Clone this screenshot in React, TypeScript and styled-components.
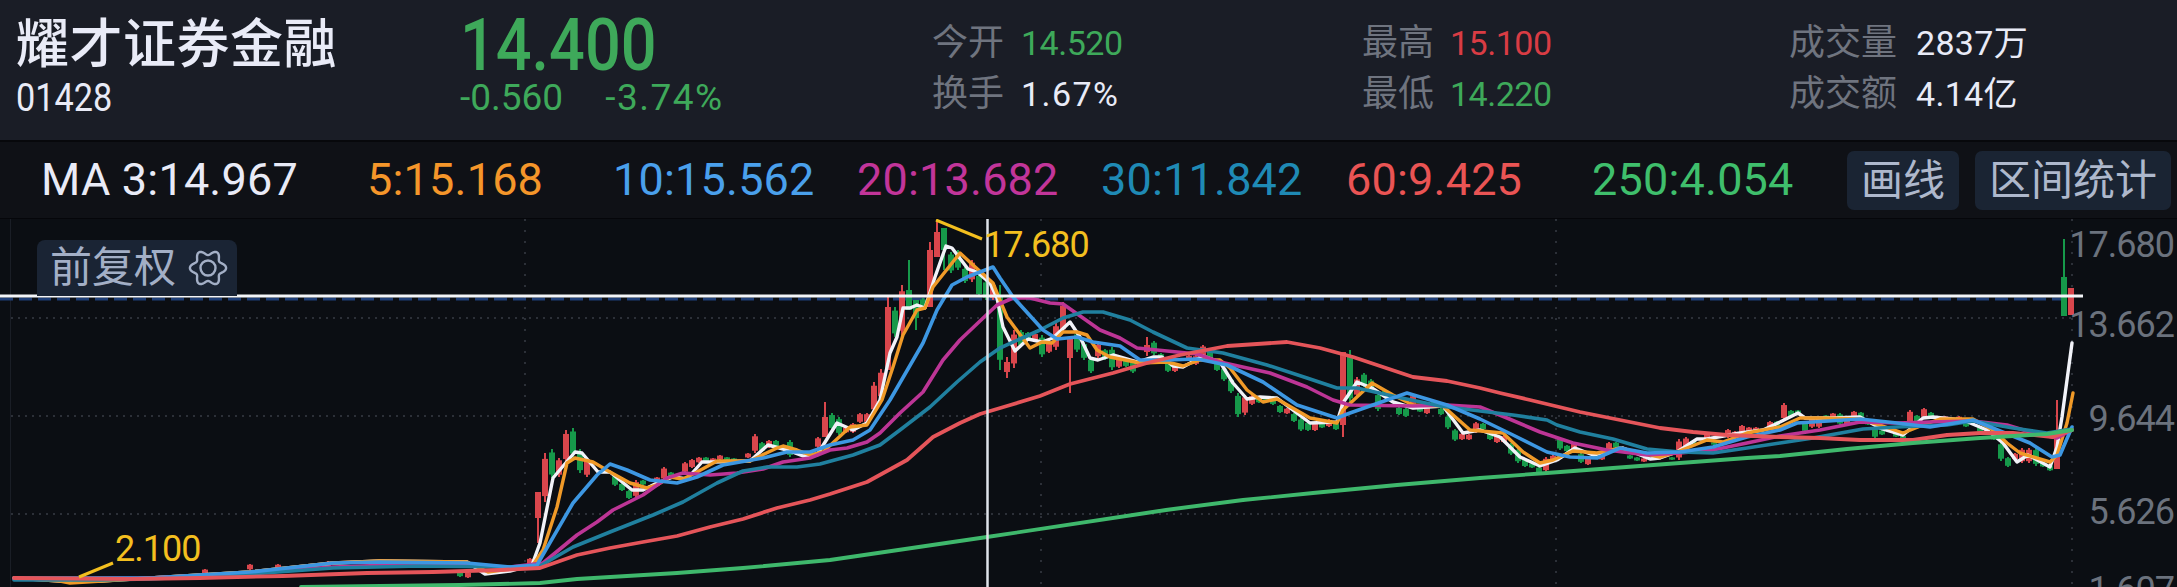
import React from 'react';
import styled, { createGlobalStyle } from 'styled-components';

const GlobalStyle = createGlobalStyle`
  html, body {
    margin: 0;
    padding: 0;
    background: #0b0e13;
  }
  body {
    width: 2177px;
    height: 587px;
    overflow: hidden;
    font-family: Roboto, 'Noto Sans CJK SC', sans-serif;
  }
`;

const GREEN = '#3ea95a';
const RED = '#d93c44';
const WHITE = '#e9ebf7';
const YELLOW = '#f3bf1f';

const Page = styled.div`
  width: 2177px;
  height: 587px;
  overflow: hidden;
  display: flex;
  flex-direction: column;
`;

const Header = styled.header`
  height: 142px;
  box-sizing: border-box;
  padding: 14px 0 0 16px;
  background: #1a1d26;
  border-bottom: 2px solid #07080b;
  display: grid;
  grid-template-columns: 444px 472px 430px 427px 1fr;
  flex: none;
`;

const Identity = styled.div`
  display: flex;
  flex-direction: column;
`;

const Title = styled.h1`
  margin: 0;
  height: 63px;
  font-size: 53px;
  line-height: 63px;
  font-weight: 500;
  letter-spacing: 0.5px;
  color: ${WHITE};
  white-space: nowrap;
`;

const Squeezed = styled.span<{ $ratio: number }>`
  display: inline-block;
  transform: scaleX(${(p) => p.$ratio});
  transform-origin: left center;
  white-space: nowrap;
`;

const Code = styled.div`
  height: 42px;
  font-size: 38px;
  line-height: 42px;
  color: ${WHITE};
`;

const PriceBlock = styled.div`
  display: flex;
  flex-direction: column;
`;

const Price = styled.div`
  height: 62px;
  padding-top: 1px;
  font-size: 72px;
  line-height: 62px;
  font-weight: 500;
  color: ${GREEN};
`;

const ChangeRow = styled.div`
  display: flex;
  gap: 42px;
  font-size: 37px;
  line-height: 42px;
  color: ${GREEN};
`;

const Percent = styled.span`
  letter-spacing: 1.5px;
`;

const StatColumn = styled.div`
  padding-top: 4px;
  display: flex;
  flex-direction: column;
`;

const Stat = styled.div<{ $gap: number }>`
  height: 51px;
  display: flex;
  align-items: center;
  gap: ${(p) => p.$gap}px;
`;

const StatLabel = styled.span`
  font-size: 36px;
  line-height: 51px;
  color: #6f747f;
  white-space: nowrap;
`;

const StatValue = styled.span<{ $color: string; $spacing?: number }>`
  font-size: 34px;
  line-height: 51px;
  letter-spacing: ${(p) => p.$spacing ?? -0.5}px;
  color: ${(p) => p.$color};
  white-space: nowrap;
`;

const MaBar = styled.div`
  height: 77px;
  box-sizing: border-box;
  padding-left: 41px;
  background: #0f1116;
  border-bottom: 1px solid #05060a;
  display: grid;
  grid-template-columns: 326px 246px 244px 244px 245px 246px 255px 1fr;
  align-items: center;
  flex: none;
`;

const MaValue = styled.span<{ $color: string }>`
  font-size: 45px;
  line-height: 76px;
  letter-spacing: 0.2px;
  color: ${(p) => p.$color};
  white-space: nowrap;
`;

const ToolGroup = styled.div`
  display: flex;
  gap: 16px;
`;

const ToolButton = styled.button`
  height: 59px;
  padding: 0 14px;
  border: none;
  border-radius: 7px;
  background: #1a2433;
  color: #aeb8cc;
  font-family: inherit;
  font-size: 42px;
  line-height: 59px;
  white-space: nowrap;
`;

const ChartArea = styled.div`
  position: relative;
  flex: 1;
  background: #0b0e13;
  overflow: hidden;
`;

const ChartSvg = styled.svg`
  display: block;
  width: 2177px;
  height: 368px;
`;

const AdjustChip = styled.div`
  position: absolute;
  left: 37px;
  top: 21px;
  width: 200px;
  height: 56px;
  box-sizing: border-box;
  padding-left: 13px;
  display: flex;
  align-items: center;
  gap: 12px;
  border-radius: 8px 8px 0 0;
  background: #1a2434;
  color: #a3afc6;
  font-size: 42px;
  line-height: 56px;
`;

const AxisLabel = styled.span<{ $top: number }>`
  position: absolute;
  right: 3px;
  top: ${(p) => p.$top}px;
  font-size: 36px;
  line-height: 36px;
  letter-spacing: -1px;
  color: #6b727d;
`;

const PriceTag = styled.span<{ $left: number; $top: number }>`
  position: absolute;
  left: ${(p) => p.$left}px;
  top: ${(p) => p.$top}px;
  font-size: 36px;
  line-height: 36px;
  letter-spacing: -1px;
  color: ${YELLOW};
`;

const GearIcon = () => {
  const pts: string[] = [];
  for (let i = 0; i < 96; i++) {
    const a = (i / 96) * Math.PI * 2;
    const r = 15.5 + 2.6 * Math.cos(6 * a);
    pts.push(`${(20 + r * Math.cos(a)).toFixed(2)},${(18 + r * Math.sin(a)).toFixed(2)}`);
  }
  return (
    <svg width="40" height="36" viewBox="0 0 40 36" fill="none" stroke="#a3afc6" strokeWidth="2.4">
      <polygon points={pts.join(' ')} strokeLinejoin="round" />
      <circle cx="20" cy="18" r="7.5" />
    </svg>
  );
};

// x, top, bottom, colour, then optional body top / bottom when it differs from the wick
type Candle = [number, number, number, 'r' | 'g', number?, number?];

const candles: Candle[] = [
  [250, 564, 570, 'r'], [278, 564, 570, 'r'], [328, 561, 568, 'r'], [205, 569, 574, 'r'], [460, 570, 577, 'g'], [468, 572, 578, 'r'],
  [530, 558, 565, 'r'], [538, 492, 543, 'r', 492, 518], [545, 453, 502, 'r'], [552, 449, 478, 'g'], [559, 458, 477, 'r'],
  [566, 430, 463, 'r'], [573, 428, 457, 'g'], [580, 449, 473, 'g'], [587, 458, 477, 'r'], [615, 475, 486, 'g'], [622, 483, 491, 'g'],
  [629, 490, 499, 'g'], [636, 480, 498, 'r'], [643, 480, 485, 'g'], [657, 477, 482, 'r'], [664, 467, 480, 'r'], [671, 472, 477, 'g'],
  [685, 462, 473, 'r'], [692, 459, 468, 'r'], [699, 457, 463, 'r'], [706, 457, 462, 'g'], [713, 458, 462, 'r'], [720, 455, 460, 'r'],
  [727, 457, 460, 'g'], [734, 458, 462, 'g'], [748, 453, 458, 'r'], [755, 434, 453, 'r'], [762, 442, 452, 'g'], [769, 440, 448, 'r'],
  [776, 440, 448, 'g'], [790, 440, 457, 'g'], [818, 437, 448, 'r'], [825, 402, 437, 'r', 417, 437], [832, 413, 430, 'g'], [839, 417, 435, 'g'],
  [846, 427, 433, 'r'], [853, 423, 433, 'r'], [860, 413, 423, 'r'], [867, 413, 423, 'r'], [874, 382, 413, 'r'], [881, 369, 400, 'r'],
  [888, 297, 370, 'r', 307, 370], [895, 307, 337, 'g'], [902, 285, 337, 'r'], [909, 260, 310, 'g', 290, 310], [916, 300, 330, 'g', 300, 318],
  [923, 298, 310, 'g'], [930, 242, 307, 'r', 250, 307], [937, 220, 257, 'r', 232, 257], [944, 228, 270, 'g', 228, 250], [951, 252, 273, 'g'],
  [958, 250, 270, 'g'], [965, 267, 283, 'g'], [972, 260, 282, 'r'], [979, 273, 297, 'g'], [986, 280, 300, 'g'], [993, 283, 300, 'r'],
  [1000, 285, 370, 'g'], [1007, 357, 378, 'r', 362, 372], [1014, 330, 368, 'r'], [1021, 330, 347, 'g'], [1028, 332, 340, 'g'], [1035, 333, 342, 'r'],
  [1042, 335, 357, 'g'], [1049, 342, 353, 'r'], [1056, 323, 350, 'r'], [1063, 302, 333, 'r'], [1070, 337, 393, 'r', 337, 358], [1077, 332, 352, 'g'],
  [1084, 342, 360, 'g'], [1091, 358, 373, 'g'], [1098, 343, 358, 'r'], [1105, 349, 360, 'g'], [1112, 347, 370, 'g'], [1119, 357, 368, 'r'],
  [1126, 358, 367, 'g'], [1133, 360, 373, 'g'], [1147, 337, 356, 'r', 345, 352], [1154, 341, 355, 'g'], [1161, 353, 363, 'g'], [1168, 362, 372, 'g'],
  [1175, 363, 372, 'r'], [1189, 355, 361, 'r'], [1196, 355, 365, 'r'], [1203, 345, 358, 'r'], [1210, 348, 360, 'g'], [1217, 362, 371, 'g'],
  [1224, 367, 381, 'g'], [1231, 378, 393, 'g'], [1238, 393, 417, 'g'], [1245, 395, 415, 'r'], [1252, 395, 405, 'r'], [1259, 397, 403, 'g'],
  [1266, 396, 403, 'g'], [1273, 396, 405, 'g'], [1280, 405, 413, 'g'], [1287, 408, 414, 'r'], [1294, 413, 422, 'g'], [1301, 418, 431, 'g'],
  [1308, 422, 431, 'g'], [1315, 423, 431, 'r'], [1322, 423, 428, 'g'], [1329, 419, 427, 'r'], [1336, 423, 430, 'g'], [1343, 352, 437, 'r', 352, 425],
  [1350, 350, 405, 'g'], [1357, 377, 397, 'r'], [1364, 373, 387, 'g'], [1371, 379, 392, 'g'], [1378, 393, 411, 'g'], [1385, 390, 398, 'g'],
  [1399, 407, 415, 'g'], [1406, 408, 417, 'g'], [1413, 395, 405, 'r'], [1420, 408, 412, 'g'], [1427, 407, 414, 'r'], [1434, 400, 407, 'g'],
  [1441, 408, 415, 'g'], [1448, 415, 429, 'g'], [1455, 429, 441, 'g'], [1462, 433, 440, 'r'], [1469, 434, 440, 'r'], [1476, 422, 433, 'r'],
  [1483, 423, 430, 'g'], [1490, 432, 440, 'g'], [1497, 435, 443, 'r'], [1504, 435, 443, 'r'], [1511, 443, 455, 'g'], [1518, 448, 463, 'g'],
  [1525, 459, 467, 'g'], [1532, 463, 468, 'g'], [1539, 467, 473, 'g'], [1546, 457, 472, 'r'], [1553, 455, 462, 'r'], [1560, 437, 450, 'g'],
  [1567, 445, 452, 'g'], [1574, 443, 452, 'r'], [1581, 453, 463, 'g'], [1588, 458, 465, 'r'], [1595, 455, 458, 'g'], [1602, 455, 460, 'r'],
  [1609, 442, 452, 'r'], [1616, 442, 448, 'g'], [1630, 455, 459, 'g'], [1637, 457, 461, 'g'], [1644, 458, 462, 'r'], [1658, 457, 460, 'r'],
  [1672, 457, 460, 'g'], [1679, 439, 460, 'r'], [1686, 437, 450, 'r'], [1693, 440, 447, 'g'], [1707, 433, 440, 'r'], [1714, 442, 445, 'g'],
  [1728, 429, 438, 'r'], [1735, 431, 438, 'r'], [1742, 425, 433, 'r'], [1749, 427, 432, 'r'], [1756, 427, 433, 'r'], [1770, 421, 430, 'r'],
  [1777, 421, 427, 'g'], [1784, 403, 420, 'r'], [1791, 410, 417, 'g'], [1798, 410, 415, 'g'], [1805, 422, 432, 'g'], [1812, 417, 428, 'r'],
  [1819, 417, 428, 'r'], [1826, 415, 420, 'g'], [1833, 413, 418, 'r'], [1840, 413, 425, 'g'], [1847, 420, 425, 'r'], [1854, 411, 418, 'r'],
  [1861, 412, 418, 'g'], [1868, 420, 425, 'g'], [1875, 427, 438, 'g'], [1882, 430, 435, 'g'], [1896, 433, 437, 'g'], [1903, 435, 442, 'g'],
  [1910, 410, 425, 'r'], [1917, 415, 422, 'g'], [1924, 408, 418, 'r'], [1931, 412, 419, 'g'], [1945, 416, 420, 'r'], [1959, 416, 422, 'r'],
  [1966, 422, 427, 'g'], [1980, 427, 432, 'g'], [1987, 428, 432, 'r'], [1994, 435, 440, 'g'], [2001, 442, 461, 'g'], [2008, 457, 467, 'g'],
  [2015, 453, 460, 'r'], [2022, 448, 463, 'r'], [2029, 448, 463, 'r'], [2036, 448, 466, 'g'], [2043, 462, 467, 'g'], [2050, 465, 471, 'g'],
  [2057, 400, 469, 'r', 430, 469], [2064, 239, 316, 'g', 277, 316], [2071, 288, 315, 'r', 288, 315],
];

const ma3 = '14,578 60,581 100,581 150,578 250,572 333,563 380,561 467,562 485,574 510,571 532,565 540,543 553,478 575,452 582,453 598,472 610,472 632,490 643,490 657,483 673,477 687,479 702,462 713,462 750,461 768,445 787,450 803,456 817,455 837,423 853,430 867,423 880,400 890,353 897,337 903,308 910,308 917,305 925,308 935,277 946,246 952,248 968,269 977,272 990,283 997,298 1003,327 1015,351 1028,339 1042,342 1053,338 1070,322 1080,337 1090,358 1098,360 1113,355 1137,362 1153,357 1162,357 1173,366 1183,367 1203,356 1220,362 1233,383 1247,399 1260,397 1277,398 1310,423 1337,422 1343,403 1357,382 1372,388 1393,402 1413,408 1443,406 1463,433 1480,430 1500,437 1520,457 1540,466 1557,460 1575,448 1593,455 1607,452 1623,448 1650,459 1660,458 1677,452 1697,439 1707,439 1740,433 1763,430 1780,422 1798,413 1805,418 1833,418 1860,417 1880,428 1903,435 1923,418 1933,417 1963,420 1987,430 2003,443 2017,462 2028,455 2050,467 2057,447 2062,417 2072,343';
const ma5 = '14,578 60,581 70,583 150,578 250,572 333,563 380,561 467,562 488,572 510,569 533,565 543,550 557,507 567,463 575,458 593,462 610,472 630,483 647,488 657,485 670,477 683,479 697,472 717,461 750,461 777,448 783,446 797,450 810,455 823,452 850,427 867,425 882,400 893,367 903,335 917,310 925,308 933,287 960,253 973,265 993,283 997,293 1007,317 1030,348 1042,342 1052,343 1063,332 1077,332 1087,335 1097,350 1110,357 1140,363 1167,362 1183,366 1200,360 1220,360 1230,368 1247,390 1263,402 1277,399 1310,418 1337,423 1343,410 1372,383 1393,395 1413,405 1443,406 1470,430 1503,433 1523,452 1540,463 1553,460 1573,451 1597,453 1620,448 1640,453 1660,457 1677,452 1707,440 1723,442 1747,433 1780,427 1800,418 1820,418 1860,419 1880,425 1903,433 1923,425 1940,419 1973,419 1993,430 2007,443 2020,453 2050,462 2057,455 2067,423 2073,393';
const ma10 = '14,578 150,578 250,572 333,563 380,562 467,563 510,567 537,565 573,503 597,475 610,464 627,470 650,480 677,483 697,477 723,465 763,458 787,452 810,452 830,445 853,440 870,430 890,400 923,343 937,310 952,285 967,277 993,267 1000,278 1013,297 1043,330 1057,339 1077,337 1093,342 1120,346 1140,360 1167,360 1197,359 1227,365 1263,382 1297,405 1337,418 1350,413 1407,393 1447,405 1480,419 1513,435 1547,452 1570,457 1597,458 1620,448 1647,453 1680,452 1713,447 1747,437 1780,430 1797,423 1860,419 1897,423 1930,427 1973,420 2010,435 2030,443 2052,457 2060,455 2072,427';
const ma20 = '14,579 150,578 250,573 333,567 420,564 510,567 543,563 577,535 597,522 613,510 643,495 667,478 683,473 710,475 737,473 763,469 783,462 810,458 830,450 847,448 867,442 880,433 900,413 923,392 943,360 960,340 980,321 997,305 1013,298 1030,298 1050,303 1063,304 1083,318 1100,330 1120,338 1137,348 1157,350 1197,354 1220,362 1270,373 1307,387 1333,400 1350,405 1413,406 1447,405 1480,407 1507,418 1540,432 1573,443 1607,450 1647,455 1680,453 1713,450 1747,443 1780,436 1820,430 1860,422 1897,423 1930,422 1973,421 2007,425 2030,432 2057,438 2072,430';
const ma30 = '14,580 100,580 150,579 250,574 333,568 420,566 510,567 540,566 573,547 610,532 653,515 683,502 717,483 743,471 767,467 797,467 820,464 853,455 880,445 900,430 930,407 957,382 980,362 1000,348 1040,330 1063,318 1083,312 1103,312 1130,320 1153,332 1187,348 1223,353 1267,365 1307,378 1337,388 1357,388 1397,397 1440,406 1480,411 1513,415 1547,420 1557,425 1580,432 1613,439 1647,449 1680,452 1713,453 1747,448 1780,443 1813,438 1863,429 1897,427 1947,425 1973,421 2013,428 2047,433 2072,429';
const ma60 = '14,578 130,579 200,578 283,576 367,573 433,572 500,570 540,568 577,555 610,548 643,542 677,536 710,527 743,519 777,508 810,500 830,494 867,482 907,460 933,437 960,423 980,414 1007,406 1040,396 1070,384 1113,373 1147,363 1180,355 1227,346 1287,342 1320,348 1353,357 1380,366 1413,377 1447,381 1480,388 1500,393 1530,400 1580,412 1620,420 1660,428 1693,432 1727,435 1780,437 1820,438 1860,440 1913,440 1947,435 1980,433 2013,433 2053,437 2072,430';
const ma250 = '301,587 459,585 540,583 577,579 677,573 743,568 830,560 987,537 1166,510 1243,500 1313,493 1397,485 1480,478 1547,473 1613,468 1680,463 1747,458 1780,456 1847,449 1913,443 1980,438 2047,434 2072,430';

const lines: [string, string, number][] = [
  [ma3, '#f1f2f8', 3.4],
  [ma5, '#f09a28', 3.4],
  [ma20, '#bd3596', 3.6],
  [ma30, '#20809f', 3.6],
  [ma10, '#3d97e2', 3.6],
  [ma60, '#e5555a', 3.8],
  [ma250, '#3fb86c', 3.8],
];

const gridRows = [318, 416, 514];
const gridCols = [525, 1041, 1556, 2072];

const Chart = () => (
  <ChartSvg viewBox="0 219 2177 368" fill="none">
    <line x1="10.5" y1="219" x2="10.5" y2="587" stroke="#1a1e26" strokeWidth="1" />
    {gridRows.map((y) => (
      <line key={y} x1="11" y1={y} x2="2072" y2={y} stroke="#2c3038" strokeWidth="2" strokeDasharray="2 5" />
    ))}
    {gridCols.map((x) => (
      <line key={x} x1={x} y1="219" x2={x} y2="587" stroke="#2c3038" strokeWidth="2" strokeDasharray="2 9" />
    ))}
    <line x1="0" y1="299" x2="2072" y2="299" stroke="#1f3f78" strokeWidth="3" strokeDasharray="13 6" />
    {candles.map(([x, top, bottom, kind, bodyTop, bodyBottom]) => {
      const color = kind === 'r' ? '#d9464c' : '#16994a';
      const inset = (bottom - top) * 0.12;
      const from = bodyTop ?? top + inset;
      const to = bodyBottom ?? bottom - inset;
      return (
        <g key={x} fill={color}>
          <rect x={x - 1} y={top} width="2" height={bottom - top} />
          <rect x={x - 3} y={from} width="6" height={to - from} />
        </g>
      );
    })}
    {lines.map(([points, color, width]) => (
      <polyline key={color} points={points} stroke={color} strokeWidth={width} strokeLinejoin="round" strokeLinecap="round" />
    ))}
    <line x1="987.5" y1="219" x2="987.5" y2="587" stroke="#dfe3ea" strokeWidth="2.5" />
    <line x1="0" y1="296" x2="2083" y2="296" stroke="#f4f5f8" strokeWidth="3" />
    <line x1="936" y1="220" x2="982" y2="239" stroke={YELLOW} strokeWidth="3" />
    <line x1="79" y1="577" x2="113" y2="563" stroke={YELLOW} strokeWidth="3" />
  </ChartSvg>
);

function App() {
  return (
    <Page>
      <GlobalStyle />
      <Header>
        <Identity>
          <Title>耀才证券金融</Title>
          <Code>
            <Squeezed $ratio={0.9}>01428</Squeezed>
          </Code>
        </Identity>
        <PriceBlock>
          <Price>
            <Squeezed $ratio={0.875}>14.400</Squeezed>
          </Price>
          <ChangeRow>
            <span>-0.560</span>
            <Percent>-3.74%</Percent>
          </ChangeRow>
        </PriceBlock>
        <StatColumn>
          <Stat $gap={17}>
            <StatLabel>今开</StatLabel>
            <StatValue $color={GREEN}>14.520</StatValue>
          </Stat>
          <Stat $gap={17}>
            <StatLabel>换手</StatLabel>
            <StatValue $color={WHITE} $spacing={1.4}>1.67%</StatValue>
          </Stat>
        </StatColumn>
        <StatColumn>
          <Stat $gap={16}>
            <StatLabel>最高</StatLabel>
            <StatValue $color={RED}>15.100</StatValue>
          </Stat>
          <Stat $gap={16}>
            <StatLabel>最低</StatLabel>
            <StatValue $color={GREEN}>14.220</StatValue>
          </Stat>
        </StatColumn>
        <StatColumn>
          <Stat $gap={19}>
            <StatLabel>成交量</StatLabel>
            <StatValue $color={WHITE} $spacing={0.3}>2837万</StatValue>
          </Stat>
          <Stat $gap={19}>
            <StatLabel>成交额</StatLabel>
            <StatValue $color={WHITE} $spacing={0.3}>4.14亿</StatValue>
          </Stat>
        </StatColumn>
      </Header>
      <MaBar>
        <MaValue $color={WHITE}>MA 3:14.967</MaValue>
        <MaValue $color="#f5962a">5:15.168</MaValue>
        <MaValue $color="#4aa0ec">10:15.562</MaValue>
        <MaValue $color="#c2359a">20:13.682</MaValue>
        <MaValue $color="#1f8ab5">30:11.842</MaValue>
        <MaValue $color="#ea5454">60:9.425</MaValue>
        <MaValue $color="#3fbf6c">250:4.054</MaValue>
        <ToolGroup>
          <ToolButton>画线</ToolButton>
          <ToolButton>区间统计</ToolButton>
        </ToolGroup>
      </MaBar>
      <ChartArea>
        <Chart />
        <AdjustChip>
          前复权
          <GearIcon />
        </AdjustChip>
        <PriceTag $left={984} $top={8}>17.680</PriceTag>
        <PriceTag $left={115} $top={312}>2.100</PriceTag>
        <AxisLabel $top={8}>17.680</AxisLabel>
        <AxisLabel $top={88}>13.662</AxisLabel>
        <AxisLabel $top={182}>9.644</AxisLabel>
        <AxisLabel $top={275}>5.626</AxisLabel>
        <AxisLabel $top={353}>1.607</AxisLabel>
      </ChartArea>
    </Page>
  );
}

export default App;
